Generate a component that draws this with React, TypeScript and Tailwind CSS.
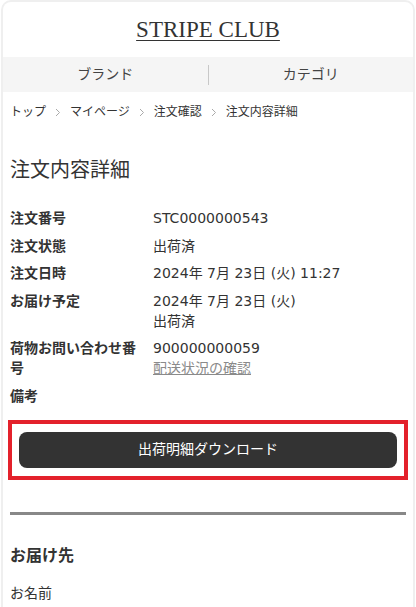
import React from 'react'

const rows: { label: string; value: React.ReactNode }[] = [
  { label: '注文番号', value: 'STC0000000543' },
  { label: '注文状態', value: '出荷済' },
  { label: '注文日時', value: '2024年 7月 23日 (火) 11:27' },
  {
    label: 'お届け予定',
    value: (
      <>
        <div>2024年 7月 23日 (火)</div>
        <div>出荷済</div>
      </>
    ),
  },
  {
    label: '荷物お問い合わせ番号',
    value: (
      <>
        <div>900000000059</div>
        <a className="text-[#8a8a8a] underline">配送状況の確認</a>
      </>
    ),
  },
  { label: '備考', value: '' },
]

const crumbs = ['トップ', 'マイページ', '注文確認', '注文内容詳細']

function Chevron() {
  return (
    <svg width="6" height="9" viewBox="0 0 6 9" className="mx-[9px]">
      <path d="M1 1l3.5 3.5L1 8" fill="none" stroke="#aaa" strokeWidth="1" />
    </svg>
  )
}

export default function App() {
  return (
    <div
      className="min-h-[607px] bg-white text-[#333]"
      style={{ fontFamily: '"DejaVu Sans", "Noto Sans CJK JP", sans-serif' }}
    >
      <div className="mx-px min-h-[607px] rounded-t-[10px] border-2 border-b-0 border-[#efefef]">
        <header className="flex h-[55px] items-center justify-center">
          <h1
            className="pt-[2px] text-[23px] text-[#333] underline decoration-1 underline-offset-[3px]"
            style={{ fontFamily: '"Liberation Serif", serif' }}
          >
            STRIPE CLUB
          </h1>
        </header>

        <nav className="flex h-[35px] items-center bg-[#f5f5f5] text-[14px] text-[#444]">
          <div className="flex-1 text-center">ブランド</div>
          <div className="h-[20px] w-px bg-[#c8c8c8]" />
          <div className="flex-1 text-center">カテゴリ</div>
        </nav>

        <div className="px-[7px]">
          <ol className="flex items-center pt-[12px] text-[12px] leading-4 text-[#333]">
            {crumbs.map((c, i) => (
              <li key={c} className="flex items-center">
                {i > 0 && <Chevron />}
                <span>{c}</span>
              </li>
            ))}
          </ol>

          <h2 className="mt-[36px] text-[20px] leading-[28px] text-[#333]">注文内容詳細</h2>

          <dl className="mt-[24px] grid grid-cols-[136px_1fr] gap-x-[7px] gap-y-[7.5px] text-[14px] leading-[20px]">
            {rows.map((r) => (
              <React.Fragment key={r.label}>
                <dt className="font-bold">{r.label}</dt>
                <dd>{r.value}</dd>
              </React.Fragment>
            ))}
          </dl>

          <div className="-mx-[2px] mt-[14px] border-4 border-[#e3212b] px-[7px] py-[8px]">
            <button className="flex h-[36px] w-full items-center justify-center rounded-[8px] bg-[#333] text-[14px] text-white">
              出荷明細ダウンロード
            </button>
          </div>

          <hr className="mt-[32px] border-t-[3px] border-[#888]" />

          <h3 className="mt-[30px] text-[16px] font-bold leading-[22px]">お届け先</h3>
          <p className="mt-[16px] text-[14px] leading-[20px]">お名前</p>
        </div>
      </div>
    </div>
  )
}
